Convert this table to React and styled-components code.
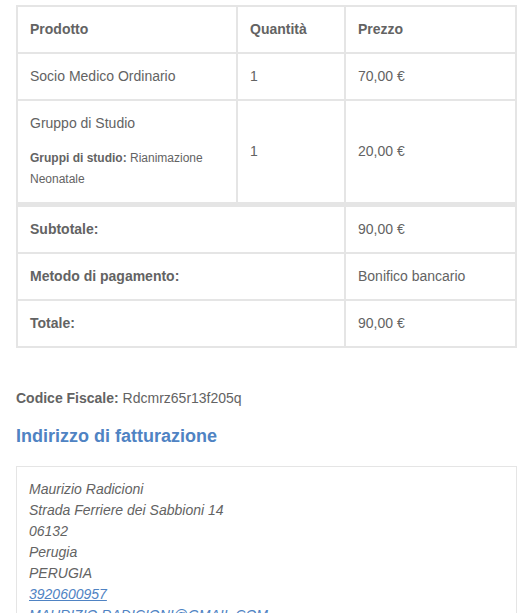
import React from "react";
import styled, { createGlobalStyle } from "styled-components";

const GlobalStyle = createGlobalStyle`
	body {
		margin: 0;
		background: #fff;
		font-family: "Liberation Sans", Arial, Helvetica, sans-serif;
	}
`;

const Page = styled.div`
	padding: 5px 4px 0 16px;
	width: 501px;
	color: #636363;
	font-size: 14px;
	line-height: 21px;
`;

const OrderTable = styled.table`
	width: 501px;
	table-layout: fixed;
	border-collapse: separate;
	border-spacing: 0;
	border: 1px solid #e5e5e5;
	margin-bottom: 40px;
	color: #636363;
`;

const Cell = styled.td`
	box-sizing: border-box;
	border: 1px solid #e5e5e5;
	border-top-width: ${(p) => (p.$first ? "4px" : "1px")};
	padding: 12px;
	text-align: left;
	vertical-align: middle;
	font-size: 14px;
	line-height: 21px;
	font-weight: normal;
	width: ${(p) => p.$width || "auto"};
`;

const HeadCell = styled(Cell).attrs({ as: "th" })`
	font-weight: bold;
`;

const MetaList = styled.ul`
	list-style: none;
	margin: 14px 0 0;
	padding: 0;
	font-size: 12px;
	line-height: 21px;
`;

const MetaLabel = styled.strong`
	font-weight: bold;
`;

const Para = styled.p`
	margin: 0 0 16px;
`;

const Heading = styled.h2`
	margin: 0 0 18px;
	color: #4f83c3;
	font-size: 18px;
	font-weight: bold;
	line-height: 130%;
`;

const Address = styled.address`
	box-sizing: border-box;
	width: 501px;
	padding: 12px;
	border: 1px solid #e5e5e5;
	font-style: italic;
	color: #636363;
	line-height: 21px;
`;

const Link = styled.a`
	color: #4f83c3;
	text-decoration: underline;
	font-weight: normal;
`;

const totals = [
	{ label: "Subtotale:", value: "90,00 €" },
	{ label: "Metodo di pagamento:", value: "Bonifico bancario" },
	{ label: "Totale:", value: "90,00 €" },
];

export default function App() {
	return (
		<Page>
			<GlobalStyle />
			<OrderTable>
				<thead>
					<tr>
						<HeadCell $width="220px">Prodotto</HeadCell>
						<HeadCell $width="108px">Quantità</HeadCell>
						<HeadCell>Prezzo</HeadCell>
					</tr>
				</thead>
				<tbody>
					<tr>
						<Cell>Socio Medico Ordinario</Cell>
						<Cell>1</Cell>
						<Cell>70,00 €</Cell>
					</tr>
					<tr>
						<Cell>
							Gruppo di Studio
							<MetaList>
								<li>
									<MetaLabel>Gruppi di studio:</MetaLabel> Rianimazione Neonatale
								</li>
							</MetaList>
						</Cell>
						<Cell>1</Cell>
						<Cell>20,00 €</Cell>
					</tr>
				</tbody>
				<tfoot>
					{totals.map((row, i) => (
						<tr key={row.label}>
							<HeadCell colSpan={2} $first={i === 0}>{row.label}</HeadCell>
							<Cell $first={i === 0}>{row.value}</Cell>
						</tr>
					))}
				</tfoot>
			</OrderTable>

			<Para>
				<strong>Codice Fiscale:</strong> Rdcmrz65r13f205q
			</Para>

			<Heading>Indirizzo di fatturazione</Heading>
			<Address>
				Maurizio Radicioni<br />
				Strada Ferriere dei Sabbioni 14<br />
				06132<br />
				Perugia<br />
				PERUGIA<br />
				<Link href="#">3920600957</Link><br />
				<Link href="#">MAURIZIO.RADICIONI@GMAIL.COM</Link>
			</Address>
		</Page>
	);
}
